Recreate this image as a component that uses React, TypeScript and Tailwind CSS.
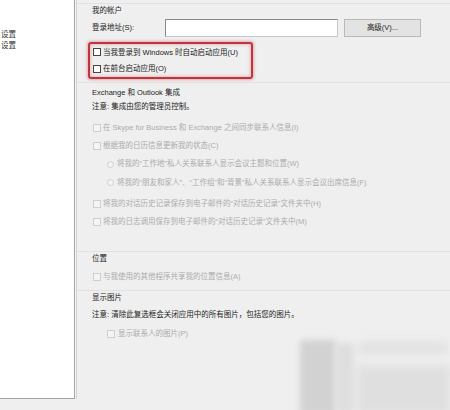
import React from "react";

const font = {
  fontFamily: "'Liberation Sans', 'Noto Sans CJK SC', sans-serif",
};

function Box({ disabled }: { disabled?: boolean }) {
  return (
    <span
      className={
        disabled
          ? "w-[8px] h-[8px] shrink-0 border border-[#cfcfcf] bg-[#f4f4f4]"
          : "w-[8px] h-[8px] shrink-0 border border-[#454545] bg-white"
      }
    />
  );
}

function Radio() {
  return (
    <span className="w-[7px] h-[7px] shrink-0 rounded-full border border-[#cfcfcf] bg-[#f4f4f4]" />
  );
}

function Check({
  label,
  disabled,
  indent,
  radio,
  h = "h-[18px]",
}: {
  label: string;
  disabled?: boolean;
  indent?: boolean;
  radio?: boolean;
  h?: string;
}) {
  return (
    <div
      className={`flex items-center ${h} ${indent ? "pl-[15px] gap-[3px]" : "pl-[1px] gap-[2px]"} ${
        disabled ? "text-[#acacac]" : "text-[#222]"
      }`}
    >
      {radio ? <Radio /> : <Box disabled={disabled} />}
      <span className="whitespace-nowrap">{label}</span>
    </div>
  );
}

function Header({ children }: { children: React.ReactNode }) {
  return <div className="h-[14px] flex items-center text-[#222]">{children}</div>;
}

export default function App() {
  return (
    <div
      className="relative w-[450px] h-[410px] bg-[#efefef] flex overflow-hidden text-[7.5px] leading-none"
      style={font}
    >
      {/* navigation list */}
      <div className="flex h-[399px] shrink-0">
        <div className="w-[75px] h-full bg-white border-r border-b border-[#a3a3a3] overflow-hidden pt-[29px] text-[#333]">
          <div className="h-[11px] flex items-center pl-[1px] whitespace-nowrap">设置</div>
          <div className="h-[11px] flex items-center pl-[1px] whitespace-nowrap">设置</div>
        </div>
        <div className="w-[1px] h-full bg-[#f7f7f7]" />
        <div className="w-[1px] h-full bg-[#d2d2d2]" />
      </div>

      {/* options */}
      <div className="flex-1 flex flex-col pt-[3px]">
        <section className="border-t border-[#e2e2e2] pl-[15px]">
          <div className="h-[13px] flex items-center text-[#222]">我的帐户</div>
          <div className="mt-[2px] h-[18px] flex items-center">
            <span className="w-[73px] text-[#222] whitespace-nowrap">登录地址(S):</span>
            <div className="w-[173px] h-[18px] bg-white border border-[#8a8a8a] border-b-[#c8c8c8] border-r-[#c8c8c8]" />
            <div className="ml-[6px] w-[77px] h-[18px] flex items-center justify-center bg-[#e3e3e3] border border-[#b9b9b9] text-[#222]">
              高级(V)...
            </div>
          </div>
          <div className="mt-[5px] -ml-[4px] w-[165px] h-[37px] rounded-[3px] border-2 border-[#bf343d] shadow-[0_0_3px_1px_rgba(210,90,100,0.45),inset_0_0_3px_1px_rgba(210,90,100,0.35)] pl-[2px] flex flex-col">
            <Check label="当我登录到 Windows 时自动启动应用(U)" h="h-[17px]" />
            <Check label="在前台启动应用(O)" h="h-[17px]" />
          </div>
        </section>

        <section className="mt-[3px] border-t border-[#e2e2e2] pl-[15px] pt-[3px]">
          <Header>Exchange 和 Outlook 集成</Header>
          <Header>注意: 集成由您的管理员控制。</Header>
          <div className="mt-[5px]">
            <Check disabled label="在 Skype for Business 和 Exchange 之间同步联系人信息(I)" />
            <Check disabled label="根据我的日历信息更新我的状态(C)" />
            <Check disabled indent radio label="将我的“工作地”私人关系联系人显示会议主题和位置(W)" />
            <Check disabled indent radio label="将我的“朋友和家人”、“工作组”和“背景”私人关系联系人显示会议出席信息(F)" h="h-[19px]" />
            <div className="h-[3px]" />
            <Check disabled label="将我的对话历史记录保存到电子邮件的“对话历史记录”文件夹中(H)" />
            <Check disabled label="将我的日志调用保存到电子邮件的“对话历史记录”文件夹中(M)" />
          </div>
        </section>

        <section className="mt-[20px] border-t border-[#e2e2e2] pl-[15px]">
          <Header>位置</Header>
          <div className="mt-[2px]">
            <Check disabled label="与我使用的其他程序共享我的位置信息(A)" />
          </div>
        </section>

        <section className="mt-[4px] border-t border-[#e2e2e2] pl-[15px]">
          <Header>显示图片</Header>
          <div className="mt-[3px]">
            <Header>注意: 清除此复选框会关闭应用中的所有图片，包括您的图片。</Header>
          </div>
          <div className="mt-[3px]">
            <Check disabled indent label="显示联系人的图片(P)" />
          </div>
        </section>
      </div>

      {/* faint stamp in the corner */}
      <div className="absolute left-[298px] top-[337px] w-[160px] h-[80px] pointer-events-none opacity-80">
        <div className="absolute left-[2px] top-[3px] w-[36px] h-[75px] bg-[#cbcbcb] blur-[3px]" />
        <div className="absolute left-[38px] top-[6px] w-[18px] h-[70px] bg-[#dadada] blur-[3px]" />
        <div className="absolute left-[60px] top-[4px] w-[90px] h-[14px] bg-[#e0e0e0] blur-[4px]" />
        <div className="absolute left-[58px] top-[28px] w-[95px] h-[50px] bg-[#dcdcdc] blur-[5px]" />
      </div>
    </div>
  );
}
